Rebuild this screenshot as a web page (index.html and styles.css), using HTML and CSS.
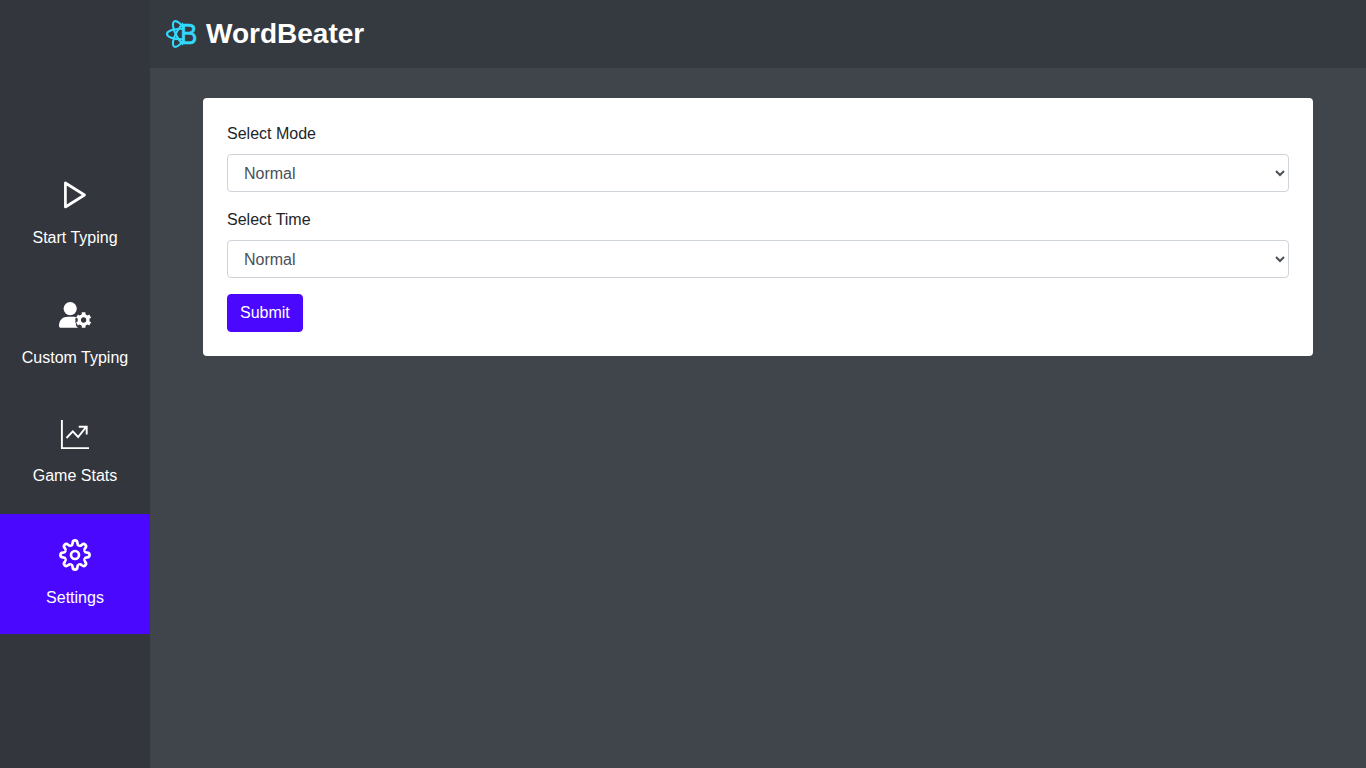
FILE: index.html
```html
<!DOCTYPE html>
<html lang="en">
<head>
<meta charset="utf-8">
<title>WordBeater</title>
<link rel="stylesheet" href="styles.css">
</head>
<body>
<nav class="sidebar">
  <a class="item">
    <svg width="32" height="32" viewBox="0 0 32 32"><path class="line" d="M6.400 4v24L25.500 16z"/></svg>
    <span>Start Typing</span>
  </a>
  <a class="item">
    <svg width="32" height="32" viewBox="0 0 32 32" fill="currentColor">
      <circle cx="11.200" cy="9.600" r="6.600"/>
      <path d="M0 27C0 21 3.500 17.700 9 17.700h5.500c1.500 0 2.300.2 3 .7-1.200.8-1.500 1.700-.9 2.900l-.4 1.700 .9 1.900-.2 1.600 2 2.200H1.500Q0 28.700 0 27z"/>
      <g transform="translate(24.600 21)">
        <circle r="4.300" fill="none" stroke="currentColor" stroke-width="3.300"/>
        <path stroke="currentColor" stroke-width="3.700" d="M0-4.500v-3.200M0 4.500v3.200M3.900-2.250l2.700-1.600M-3.900 2.250l-2.700 1.600M3.900 2.250l2.700 1.600M-3.900-2.250l-2.700-1.600"/>
      </g>
    </svg>
    <span>Custom Typing</span>
  </a>
  <a class="item stats">
    <svg width="32" height="32" viewBox="0 0 32 32"><path class="thin" d="M2.900 1v28.100H30M7.500 19l6.300-6.700 5.300 5.700 8.300-10.300M19.700 7.700h8v7.700"/></svg>
    <span>Game Stats</span>
  </a>
  <a class="item active">
    <svg width="32" height="32" viewBox="-16 -16 32 32">
      <defs><path id="tooth" d="M-4-9.650C-2.900-9.900-2.450-10.600-2.400-11.900-2.300-15.500 2.300-15.500 2.400-11.900 2.450-10.600 2.900-9.900 4-9.650"/></defs>
      <g class="line">
        <use href="#tooth"/><use href="#tooth" transform="rotate(45)"/><use href="#tooth" transform="rotate(90)"/><use href="#tooth" transform="rotate(135)"/>
        <use href="#tooth" transform="rotate(180)"/><use href="#tooth" transform="rotate(225)"/><use href="#tooth" transform="rotate(270)"/><use href="#tooth" transform="rotate(315)"/>
        <circle r="4"/>
      </g>
    </svg>
    <span>Settings</span>
  </a>
</nav>
<div class="page">
  <header class="navbar">
    <svg class="logo" width="32" height="32" viewBox="0 0 32 32">
      <defs><clipPath id="half"><path d="M-1-1h18v34h-18z"/></clipPath></defs>
      <g clip-path="url(#half)" fill="none" stroke="#32d9fe" stroke-width="2.100">
        <ellipse cx="15.500" cy="16" rx="14.500" ry="5.200"/>
        <ellipse cx="15.500" cy="16" rx="14.500" ry="5.200" transform="rotate(60 15.500 16)"/>
        <ellipse cx="15.500" cy="16" rx="14.500" ry="5.200" transform="rotate(-60 15.500 16)"/>
      </g>
      <text class="mark" transform="translate(14.200 26.300) scale(.85 1)">B</text>
    </svg>
    <h1>WordBeater</h1>
  </header>
  <main>
    <form class="card">
      <label for="mode">Select Mode</label>
      <select id="mode"><option>Normal</option></select>
      <label for="time">Select Time</label>
      <select id="time"><option>Normal</option></select>
      <button type="button">Submit</button>
    </form>
  </main>
</div>
</body>
</html>
```
FILE: styles.css
```css
*{box-sizing:border-box}
body{margin:0;height:100vh;display:flex;overflow:hidden;background:#40444b;font:16px/24px "Liberation Sans",Arial,sans-serif}
.sidebar{width:150px;padding-top:154px;background:#33363d;color:#fff}
.item{display:flex;flex-direction:column;align-items:center;height:120px;padding-top:25px}
.item span{margin-top:15px}
.item.stats span{margin-top:13px}
.item.active{background:#4b08ff}
.item svg{display:block;overflow:visible}
.line{fill:none;stroke:currentColor;stroke-width:2.7;stroke-linejoin:round}
.thin{fill:none;stroke:currentColor;stroke-width:1.9}
.page{flex:1}
.navbar{display:flex;align-items:center;height:68px;padding:0 16px;background:#343a40}
.logo{overflow:visible}
.mark{font:30px "Liberation Sans",Arial,sans-serif;fill:#32d9fe;stroke:#32d9fe;stroke-width:.7;stroke-linejoin:round}
h1{margin:0 0 0 8px;font-size:28px;line-height:42px;color:#fff}
main{padding:30px 53px}
.card{height:258px;padding:24px;background:#fff;border-radius:4px}
label{display:block;margin-bottom:8px;color:#212529}
select{display:block;width:100%;height:38px;margin-bottom:16px;padding:6px 12px;border:1px solid #ced4da;border-radius:4px;background:#fff;color:#495057;font:inherit}
button{display:block;height:38px;padding:6px 12px;border:1px solid #4b08ff;border-radius:4px;background:#4b08ff;color:#fff;font:inherit}
```
